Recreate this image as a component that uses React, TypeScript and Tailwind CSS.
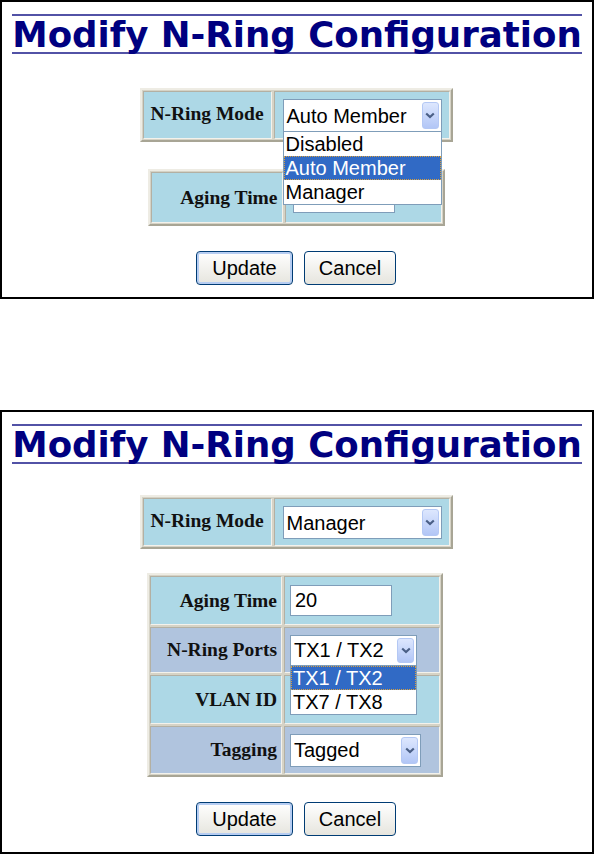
import React from 'react';

const serif = "font-['Liberation_Serif',serif]";
const sans = "font-['Liberation_Sans',Arial,sans-serif]";

const outerBox =
  'border-2 border-t-[#eeece4] border-l-[#eeece4] border-b-[#a8a595] border-r-[#a8a595] bg-[#d6d3c6] p-[1px]';
const cellBox =
  'border border-t-[#b3b0a3] border-l-[#b3b0a3] border-b-[#f3f2ec] border-r-[#f3f2ec]';

const Chevron = () => (
  <div className="absolute right-[2px] top-[2px] bottom-[2px] w-[17px] rounded-[3px] border border-[#b4c8f4] bg-gradient-to-b from-[#dde7fe] to-[#b2c6f6] flex items-center justify-center">
    <svg width="10" height="7" viewBox="0 0 10 7">
      <path d="M1.2 1.5 L5 5 L8.8 1.5" fill="none" stroke="#4a5f86" strokeWidth="2.2" />
    </svg>
  </div>
);

interface SelectProps {
  value: string;
  width: string;
  height: string;
  options?: string[];
  selected?: number;
}

const Select: React.FC<SelectProps> = ({ value, width, height, options, selected }) => (
  <div className={`relative ${width} ${height} bg-white border border-[#7f9db9] ${sans} text-[20px] text-black leading-none flex items-center pl-[3px]`}>
    <span>{value}</span>
    <Chevron />
    {options && (
      <div className="absolute left-[-1px] right-[-1px] top-full z-10 bg-white border border-[#7f9db9]">
        {options.map((opt, i) => (
          <div
            key={opt}
            className={
              i === selected
                ? 'h-[24px] leading-[24px] pl-[2px] bg-[#316ac5] text-white outline-1 outline-dotted outline-[#d8a040] -outline-offset-1'
                : 'h-[24px] leading-[24px] pl-[2px]'
            }
          >
            {opt}
          </div>
        ))}
      </div>
    )}
  </div>
);

const TextInput = ({ value }: { value: string }) => (
  <div className={`w-[102px] h-[31px] bg-white border border-[#7f9db9] ${sans} text-[20px] leading-[29px] pl-[4px]`}>
    {value}
  </div>
);

const Title = () => (
  <div className="flex justify-center pt-[12px]">
    <div className="border-t-2 border-b-2 border-[#5252a6] pt-[1px] h-[40px]">
      <h1 className="font-['DejaVu_Sans',Verdana,sans-serif] font-bold text-[35.6px] leading-[36px] text-[#000080] whitespace-nowrap">
        Modify N-Ring Configuration
      </h1>
    </div>
  </div>
);

const Buttons = () => (
  <div className={`flex justify-center gap-[11px] ${sans} text-[20px]`}>
    <button className="w-[97px] h-[34px] rounded-[4px] border border-[#003c74] bg-gradient-to-b from-white to-[#e6e5de] shadow-[inset_0_0_0_2px_#b6cdf2] text-black">
      Update
    </button>
    <button className="w-[92px] h-[34px] rounded-[4px] border border-[#003c74] bg-gradient-to-b from-white to-[#e6e5de] text-black">
      Cancel
    </button>
  </div>
);

const Label = ({ children, right }: { children: React.ReactNode; right?: boolean }) => (
  <span className={`${serif} font-bold text-[19.5px] text-[#111] ${right ? 'block text-right pr-[4px]' : ''}`}>
    {children}
  </span>
);

const ModeTable = ({ value, open }: { value: string; open?: boolean }) => (
  <div className={`w-[313px] ${outerBox}`}>
    <div className="grid grid-cols-[129px_1fr] gap-[2px]">
      <div className={`${cellBox} bg-[#add8e6] h-[48px] pt-[7px] text-center`}>
        <Label>N-Ring Mode</Label>
      </div>
      <div className={`${cellBox} bg-[#add8e6] h-[48px] pt-[7px] pl-[8px]`}>
        <Select
          value={value}
          width="w-[159px]"
          height="h-[33px]"
          options={open ? ['Disabled', 'Auto Member', 'Manager'] : undefined}
          selected={1}
        />
      </div>
    </div>
  </div>
);

export default function App() {
  return (
    <div className="w-[594px] bg-white">
      {/* first screen: mode drop-down open */}
      <div className="h-[299px] border-2 border-black">
        <Title />
        <div className="flex justify-center mt-[34px] pr-[2px] relative z-10">
          <ModeTable value="Auto Member" open />
        </div>
        <div className="flex justify-center mt-[27px] pr-[2px]">
          <div className={`w-[297px] ${outerBox}`}>
            <div className="grid grid-cols-[132px_1fr] gap-[2px]">
              <div className={`${cellBox} bg-[#add8e6] h-[51px] flex items-center justify-end`}>
                <Label right>Aging Time</Label>
              </div>
              <div className={`${cellBox} bg-[#add8e6] h-[51px] flex items-center pl-[7px]`}>
                <TextInput value="" />
              </div>
            </div>
          </div>
        </div>
        <div className="mt-[25px] pr-[2px]">
          <Buttons />
        </div>
      </div>

      <div className="h-[111px]" />

      {/* second screen: manager mode, ports drop-down open */}
      <div className="h-[444px] border-2 border-black">
        <Title />
        <div className="flex justify-center mt-[31px] pr-[2px]">
          <ModeTable value="Manager" />
        </div>
        <div className="flex justify-center mt-[24px] pr-[4px]">
          <div className={`w-[296px] ${outerBox}`}>
            <div className="grid grid-cols-[132px_1fr] gap-[2px]">
              <div className={`${cellBox} bg-[#add8e6] h-[49px] flex items-center justify-end`}>
                <Label right>Aging Time</Label>
              </div>
              <div className={`${cellBox} bg-[#add8e6] h-[49px] flex items-center pl-[5px]`}>
                <TextInput value="20" />
              </div>
              <div className={`${cellBox} bg-[#b0c4de] h-[46px] flex items-center justify-end`}>
                <Label right>N-Ring Ports</Label>
              </div>
              <div className={`${cellBox} bg-[#b0c4de] h-[46px] flex items-center pl-[5px] relative z-10`}>
                <Select
                  value="TX1 / TX2"
                  width="w-[127px]"
                  height="h-[31px]"
                  options={['TX1 / TX2', 'TX7 / TX8']}
                  selected={0}
                />
              </div>
              <div className={`${cellBox} bg-[#add8e6] h-[49px] flex items-center justify-end`}>
                <Label right>VLAN ID</Label>
              </div>
              <div className={`${cellBox} bg-[#add8e6] h-[49px] flex items-center pl-[5px]`}>
                <TextInput value="" />
              </div>
              <div className={`${cellBox} bg-[#b0c4de] h-[48px] flex items-center justify-end`}>
                <Label right>Tagging</Label>
              </div>
              <div className={`${cellBox} bg-[#b0c4de] h-[48px] flex items-center pl-[5px]`}>
                <Select value="Tagged" width="w-[131px]" height="h-[33px]" />
              </div>
            </div>
          </div>
        </div>
        <div className="mt-[25px] pr-[2px]">
          <Buttons />
        </div>
      </div>
    </div>
  );
}
